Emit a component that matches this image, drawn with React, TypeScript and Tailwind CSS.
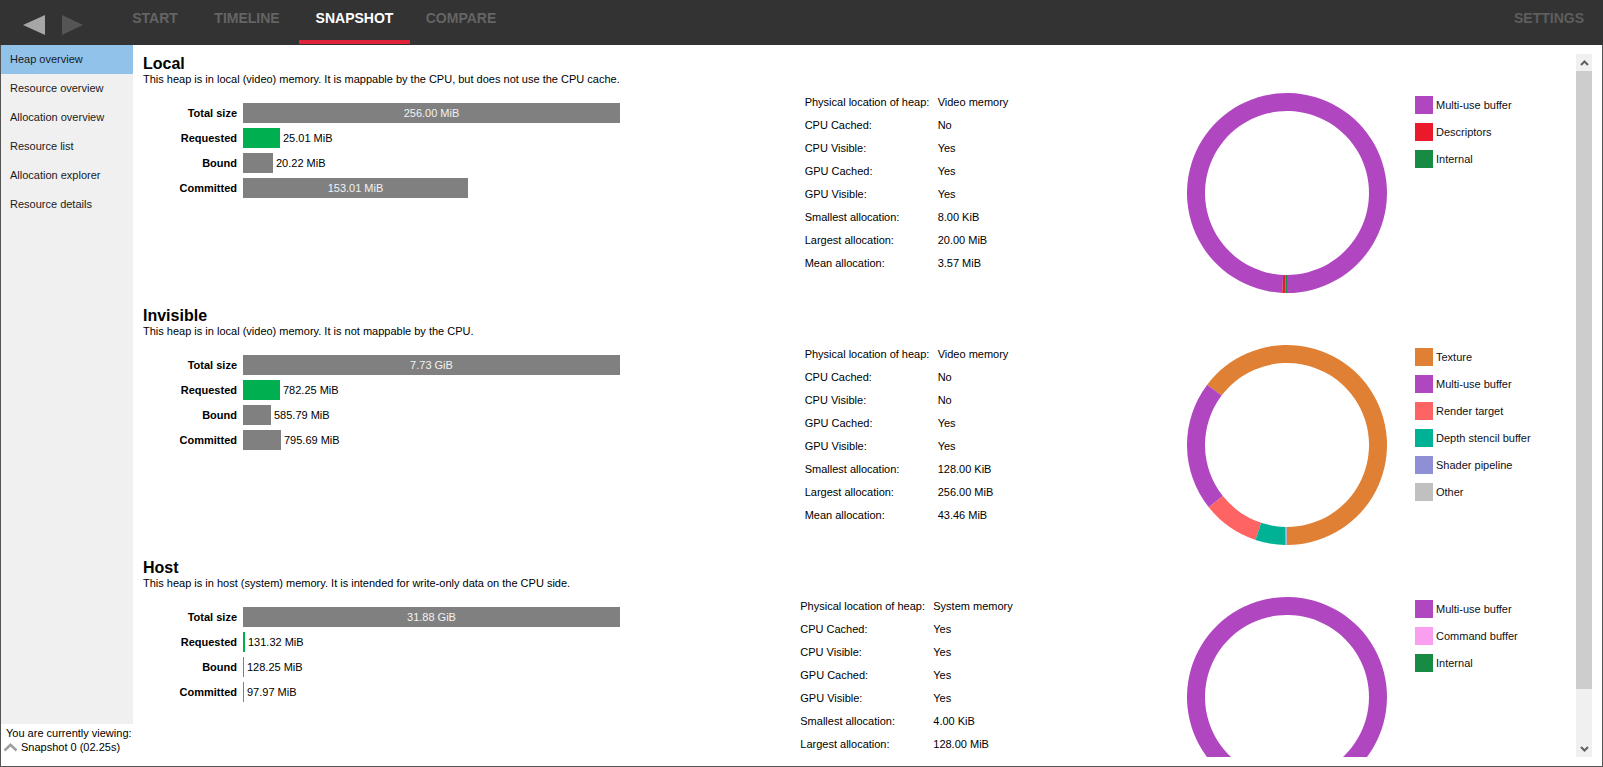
import React from "react";

type Bar = { label: string; value: number; text: string; green?: boolean };
type Slice = { name: string; color: string; value: number };
type Heap = {
  name: string;
  desc: string;
  total: number;
  totalText: string;
  bars: Bar[];
  props: [string, string][];
  slices: Slice[];
};

const MIB = 1;
const GIB = 1024;

const heaps: Heap[] = [
  {
    name: "Local",
    desc: "This heap is in local (video) memory. It is mappable by the CPU, but does not use the CPU cache.",
    total: 256 * MIB,
    totalText: "256.00 MiB",
    bars: [
      { label: "Requested", value: 25.01, text: "25.01 MiB", green: true },
      { label: "Bound", value: 20.22, text: "20.22 MiB" },
      { label: "Committed", value: 153.01, text: "153.01 MiB" },
    ],
    props: [
      ["Physical location of heap:", "Video memory"],
      ["CPU Cached:", "No"],
      ["CPU Visible:", "Yes"],
      ["GPU Cached:", "Yes"],
      ["GPU Visible:", "Yes"],
      ["Smallest allocation:", "8.00 KiB"],
      ["Largest allocation:", "20.00 MiB"],
      ["Mean allocation:", "3.57 MiB"],
    ],
    slices: [
      { name: "Multi-use buffer", color: "#b047c0", value: 99.25 },
      { name: "Descriptors", color: "#ea1a2a", value: 0.5 },
      { name: "Internal", color: "#178a44", value: 0.25 },
    ],
  },
  {
    name: "Invisible",
    desc: "This heap is in local (video) memory. It is not mappable by the CPU.",
    total: 7.73 * GIB,
    totalText: "7.73 GiB",
    bars: [
      { label: "Requested", value: 782.25, text: "782.25 MiB", green: true },
      { label: "Bound", value: 585.79, text: "585.79 MiB" },
      { label: "Committed", value: 795.69, text: "795.69 MiB" },
    ],
    props: [
      ["Physical location of heap:", "Video memory"],
      ["CPU Cached:", "No"],
      ["CPU Visible:", "No"],
      ["GPU Cached:", "Yes"],
      ["GPU Visible:", "Yes"],
      ["Smallest allocation:", "128.00 KiB"],
      ["Largest allocation:", "256.00 MiB"],
      ["Mean allocation:", "43.46 MiB"],
    ],
    slices: [
      { name: "Texture", color: "#e08034", value: 64.7 },
      { name: "Multi-use buffer", color: "#b047c0", value: 21 },
      { name: "Render target", color: "#ff6464", value: 9.2 },
      { name: "Depth stencil buffer", color: "#00b295", value: 4.8 },
      { name: "Shader pipeline", color: "#8f8fd6", value: 0.25 },
      { name: "Other", color: "#c0c0c0", value: 0.05 },
    ],
  },
  {
    name: "Host",
    desc: "This heap is in host (system) memory. It is intended for write-only data on the CPU side.",
    total: 31.88 * GIB,
    totalText: "31.88 GiB",
    bars: [
      { label: "Requested", value: 131.32, text: "131.32 MiB", green: true },
      { label: "Bound", value: 128.25, text: "128.25 MiB" },
      { label: "Committed", value: 97.97, text: "97.97 MiB" },
    ],
    // the last row is scrolled out of view in the screenshot
    props: [
      ["Physical location of heap:", "System memory"],
      ["CPU Cached:", "Yes"],
      ["CPU Visible:", "Yes"],
      ["GPU Cached:", "Yes"],
      ["GPU Visible:", "Yes"],
      ["Smallest allocation:", "4.00 KiB"],
      ["Largest allocation:", "128.00 MiB"],
    ],
    slices: [
      { name: "Multi-use buffer", color: "#b047c0", value: 99.5 },
      { name: "Command buffer", color: "#fa9ef0", value: 0.3 },
      { name: "Internal", color: "#178a44", value: 0.2 },
    ],
  },
];

const BAR_W = 377;

// slices start at 6 o'clock and run counter-clockwise on screen
function Donut({ slices }: { slices: Slice[] }) {
  const cx = 100;
  const cy = 100;
  const R = 100;
  const r = 82;
  const sum = slices.reduce((a, s) => a + s.value, 0);
  const p = (rad: number, t: number) => {
    const a = t * Math.PI * 2;
    return `${(cx + rad * Math.sin(a)).toFixed(3)} ${(cy + rad * Math.cos(a)).toFixed(3)}`;
  };
  let acc = 0;
  return (
    <svg width="200" height="200" viewBox="0 0 200 200">
      {slices.map((s) => {
        const t1 = acc / sum;
        acc += s.value;
        const t2 = acc / sum;
        const large = t2 - t1 > 0.5 ? 1 : 0;
        const d = `M ${p(R, t1)} A ${R} ${R} 0 ${large} 0 ${p(R, t2)} L ${p(r, t2)} A ${r} ${r} 0 ${large} 1 ${p(r, t1)} Z`;
        return <path key={s.name} d={d} fill={s.color} />;
      })}
    </svg>
  );
}

function HeapSection({ heap }: { heap: Heap }) {
  return (
    <div className="h-[252px] shrink-0">
      <div className="text-[16px] leading-[18px] font-bold text-black">{heap.name}</div>
      <div className="text-[11px] leading-[13px] text-black">{heap.desc}</div>
      <div className="flex mt-[5px]">
        {/* bars */}
        <div className="w-[580px] pt-[12px] flex flex-col gap-[5px]">
          <div className="flex items-center h-[20px]">
            <div className="w-[94px] text-right text-[11px] font-bold">Total size</div>
            <div className="ml-[6px] w-[377px] h-[20px] bg-[#808080] flex items-center justify-center text-[11px] text-[#f2f2f2]">
              {heap.totalText}
            </div>
          </div>
          {heap.bars.map((b) => {
            const w = Math.max(1, Math.round((b.value / heap.total) * BAR_W));
            const inside = w > 100;
            return (
              <div key={b.label} className="flex items-center h-[20px]">
                <div className="w-[94px] text-right text-[11px] font-bold">{b.label}</div>
                <div
                  className={`ml-[6px] h-[20px] flex items-center justify-center text-[11px] text-[#f2f2f2] ${
                    b.green ? "bg-[#00b050]" : "bg-[#808080]"
                  }`}
                  style={{ width: w }}
                >
                  {inside ? b.text : null}
                </div>
                {!inside && <span className="ml-[3px] text-[11px] text-black">{b.text}</span>}
              </div>
            );
          })}
        </div>
        {/* properties */}
        <div className="w-[367px] flex justify-center">
          <div className="flex flex-col">
            {heap.props.map(([k, v]) => (
              <div key={k} className="flex items-center h-[23px] text-[11px] text-black">
                <span className="w-[133px]">{k}</span>
                <span>{v}</span>
              </div>
            ))}
          </div>
        </div>
        {/* chart */}
        <div className="pl-[97px] mt-[2px]">
          <Donut slices={heap.slices} />
        </div>
        <div className="ml-[28px] pt-[5px] flex flex-col gap-[9px]">
          {heap.slices.map((s) => (
            <div key={s.name} className="flex items-center h-[18px]">
              <div className="w-[18px] h-[18px]" style={{ backgroundColor: s.color }} />
              <span className="ml-[3px] text-[11px] text-[#101020]">{s.name}</span>
            </div>
          ))}
        </div>
      </div>
    </div>
  );
}

const navItems = [
  "Heap overview",
  "Resource overview",
  "Allocation overview",
  "Resource list",
  "Allocation explorer",
  "Resource details",
];

const tabs = [
  { name: "START", w: "w-[80px]" },
  { name: "TIMELINE", w: "w-[104px]" },
  { name: "SNAPSHOT", w: "w-[111px]" },
  { name: "COMPARE", w: "w-[102px]" },
];

function Chevron({ up }: { up: boolean }) {
  return (
    <svg width="9" height="6" viewBox="0 0 9 6">
      <path
        d={up ? "M1 5 L4.5 1.5 L8 5" : "M1 1 L4.5 4.5 L8 1"}
        fill="none"
        stroke="#606060"
        strokeWidth="2"
      />
    </svg>
  );
}

export default function App() {
  return (
    <div className="w-[1603px] h-[767px] overflow-hidden flex flex-col bg-white font-['Liberation_Sans',Arial,sans-serif]">
      {/* top bar */}
      <div className="h-[45px] shrink-0 bg-[#333333] flex items-stretch">
        <div className="flex items-center pl-[23px] pt-[5px] gap-[17px] w-[115px]">
          <svg width="22" height="20" viewBox="0 0 22 20">
            <polygon points="0,10 22,0 22,20" fill="#a6a6a6" />
          </svg>
          <svg width="21" height="20" viewBox="0 0 21 20">
            <polygon points="21,10 0,0 0,20" fill="#555555" />
          </svg>
        </div>
        {tabs.map((t) => {
          const active = t.name === "SNAPSHOT";
          return (
            <div
              key={t.name}
              className={`relative ${t.w} pt-[10px] text-center text-[14px] font-bold leading-[17px] ${
                active ? "text-white" : "text-[#646464]"
              }`}
            >
              {t.name}
              {active && <div className="absolute left-0 right-0 bottom-[1px] h-[4px] bg-[#e0233a]" />}
            </div>
          );
        })}
        <div className="flex-1" />
        <div className="pr-[19px] pt-[10px] text-[14px] font-bold leading-[17px] text-[#5e5e5e]">SETTINGS</div>
      </div>

      {/* body */}
      <div className="flex-1 flex border-l border-r border-b border-[#555555] min-h-0">
        {/* sidebar */}
        <div className="w-[132px] shrink-0 flex flex-col">
          <div className="flex-1 bg-[#f0f0f0]">
            {navItems.map((n, i) => (
              <div
                key={n}
                className={`h-[29px] pl-[9px] flex items-center text-[11px] text-[#1a1a1a] ${
                  i === 0 ? "bg-[#91c2ea]" : ""
                }`}
              >
                {n}
              </div>
            ))}
          </div>
          <div className="h-[42px] pt-[2px] pl-[5px] text-[11px] leading-[14px] text-black">
            <div>You are currently viewing:</div>
            <div className="flex items-center">
              <svg width="15" height="9" viewBox="0 0 15 9" className="-ml-[3px] mr-[3px]">
                <path d="M1.5 7.5 L7.5 1.8 L13.5 7.5" fill="none" stroke="#a0a0a0" strokeWidth="2.6" />
              </svg>
              <span>Snapshot 0 (02.25s)</span>
            </div>
          </div>
        </div>

        {/* main */}
        <div className="flex-1 min-w-0 flex pt-[9px] pb-[9px] pr-[10px]">
          <div className="flex-1 min-w-0 overflow-hidden pl-[10px] pt-[1px] flex flex-col">
            {heaps.map((h) => (
              <HeapSection key={h.name} heap={h} />
            ))}
          </div>
          {/* scrollbar */}
          <div className="w-[16px] shrink-0 bg-[#f0f0f0] flex flex-col">
            <div className="h-[17px] flex items-center justify-center">
              <Chevron up />
            </div>
            <div className="h-[618px] bg-[#cdcdcd]" />
            <div className="flex-1" />
            <div className="h-[17px] flex items-center justify-center">
              <Chevron up={false} />
            </div>
          </div>
        </div>
      </div>
    </div>
  );
}
